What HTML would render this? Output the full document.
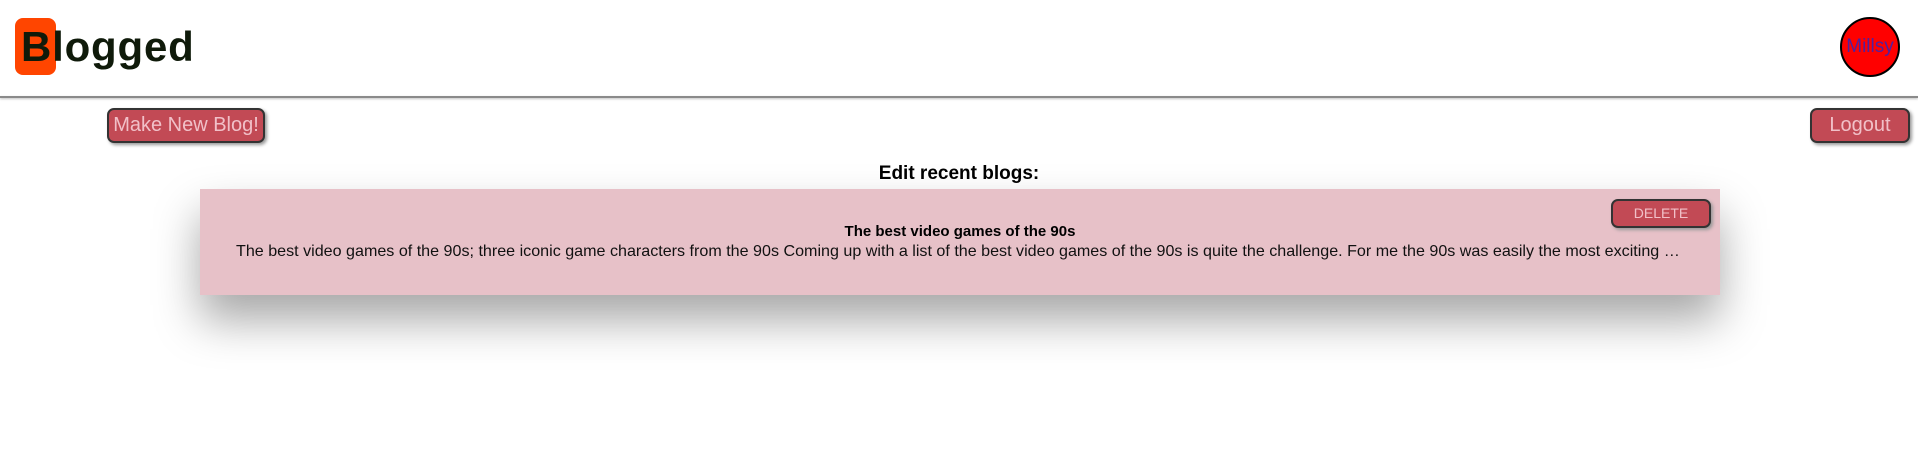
<!DOCTYPE html>
<html><head><style>
body{margin:0;width:1918px;height:457px;background:#fff;font-family:"Liberation Sans",Arial,sans-serif;position:relative;overflow:hidden}
.logo{position:absolute;left:15px;top:18px;width:41px;height:57px;background:#ff4500;border-radius:8px}
.logotxt{position:absolute;left:21px;top:23px;font-size:42px;font-weight:bold;color:#0f1a0a;letter-spacing:0.8px}
.line{position:absolute;left:0;top:96px;width:1918px;height:2px;background:#8a8a8a;box-shadow:0 1px 2px #bbb}
.av{position:absolute;left:1840px;top:17px;width:56px;height:56px;border:2px solid #000;border-radius:50%;background:#f00;color:#5020a0;font-size:19px;line-height:56px;text-align:center;overflow:hidden;white-space:nowrap}
.btn{position:absolute;background:#c24a55;color:#f1c0c8;border:2px solid #333;border-radius:7px;box-shadow:2px 2px 3px #999;font-size:20px;text-align:center;box-sizing:border-box}
h3{position:absolute;left:0;width:1918px;top:163px;margin:0;text-align:center;font-size:19px;font-weight:bold}
.card{position:absolute;left:200px;top:189px;width:1520px;height:106px;background:#e7c1c8;box-shadow:0 25px 45px rgba(0,0,0,.35)}
.t{position:absolute;left:0;width:1520px;top:34px;text-align:center;font-size:15px;font-weight:bold}
.b{position:absolute;left:36px;width:1445px;top:53px;font-size:16.1px;white-space:nowrap;overflow:hidden;text-overflow:ellipsis;color:#111}
</style></head><body>
<div class="logo"></div><div class="logotxt">Blogged</div>
<div class="av">Millsy</div>
<div class="line"></div>
<div class="btn" style="left:107px;top:108px;width:158px;height:35px;line-height:31px">Make New Blog!</div>
<div class="btn" style="left:1810px;top:108px;width:100px;height:35px;line-height:31px">Logout</div>
<h3>Edit recent blogs:</h3>
<div class="card">
<div class="t">The best video games of the 90s</div>
<div class="b">The best video games of the 90s; three iconic game characters from the 90s Coming up with a list of the best video games of the 90s is quite the challenge. For me the 90s was easily the most exciting decade for gaming and there were so many</div>
<div class="btn" style="left:1411px;top:10px;width:100px;height:29px;line-height:25px;font-size:14px">DELETE</div>
</div>
</body></html>
